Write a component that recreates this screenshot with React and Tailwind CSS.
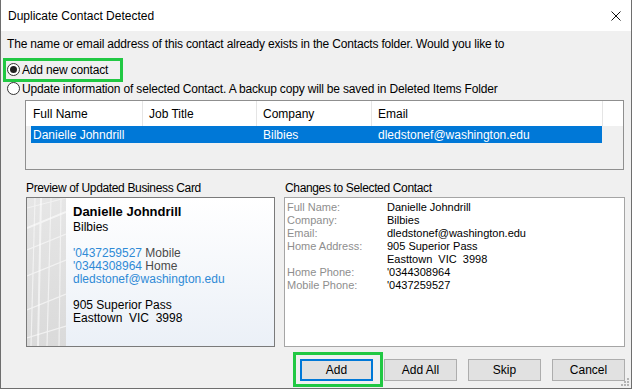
export default function App() {
  const btn =
    "w-[73px] h-[22px] bg-[#e1e1e1] border border-[#adadad] flex items-center justify-center text-[12px] text-black";
  return (
    <div className="relative w-[632px] h-[389px] bg-[#f0f0f0] border-x border-b border-[#6e6e6e] flex flex-col text-[12px] text-black font-['Liberation_Sans',Arial,sans-serif]">
      {/* title bar */}
      <div className="h-[31px] bg-white flex items-center justify-between pl-[7px] pr-[10px] shrink-0">
        <span className="leading-[16px]">Duplicate Contact Detected</span>
        <svg width="10" height="10" viewBox="0 0 10 10" className="block">
          <path d="M0.5 0.5 L9.5 9.5 M9.5 0.5 L0.5 9.5" stroke="#111" strokeWidth="1" />
        </svg>
      </div>

      <div className="mt-[5px] pl-[6px] leading-[16px] whitespace-nowrap tracking-[-0.17px]">
        The name or email address of this contact already exists in the Contacts folder. Would you like to
      </div>

      <div className="mt-[8px] flex flex-col tracking-[-0.17px]">
        <div className="h-[19px] flex items-center pl-[6px]">
          <span className="w-[13px] h-[13px] rounded-full border border-[#333] bg-white flex items-center justify-center">
            <span className="w-[7px] h-[7px] rounded-full bg-[#222]" />
          </span>
          <span className="ml-[2px] leading-[16px]">Add new contact</span>
        </div>
        <div className="h-[19px] flex items-center pl-[6px]">
          <span className="w-[13px] h-[13px] rounded-full border border-[#333] bg-white" />
          <span className="ml-[2px] leading-[16px] whitespace-nowrap">
            Update information of selected Contact. A backup copy will be saved in Deleted Items Folder
          </span>
        </div>
      </div>

      {/* list */}
      <div className="mt-[2px] ml-[24px] mr-[7px] h-[70px] border border-[#8f8f8f] bg-[#f0f0f0] flex flex-col">
        <div className="h-[25px] bg-white flex items-center">
          <div className="w-[117px] h-full border-r border-[#e5e5e5] pl-[7px] flex items-center">Full Name</div>
          <div className="w-[114px] h-full border-r border-[#e5e5e5] pl-[6px] flex items-center">Job Title</div>
          <div className="w-[115px] h-full border-r border-[#e5e5e5] pl-[6px] flex items-center">Company</div>
          <div className="w-[231px] h-full border-r border-[#e5e5e5] pl-[6px] flex items-center">Email</div>
        </div>
        <div className="ml-[5px] w-[571px] h-[17px] bg-[#0078d7] text-white flex items-center">
          <div className="w-[230px] pl-[2px]">Danielle Johndrill</div>
          <div className="w-[115px] pl-[2px]">Bilbies</div>
          <div className="pl-[2px]">dledstonef@washington.edu</div>
        </div>
      </div>

      {/* preview + changes */}
      <div className="mt-[10px] flex">
        <div className="ml-[25px] w-[249px] flex flex-col">
          <div className="leading-[16px] tracking-[-0.35px] whitespace-nowrap">Preview of Updated Business Card</div>
          <div className="mt-[1px] h-[150px] border border-[#7a7a7a] flex bg-gradient-to-b from-white to-[#ebf0f7]">
            <svg width="39" height="148" viewBox="0 0 39 148" className="block shrink-0">
              <defs>
                <linearGradient id="strip" x1="0" y1="0" x2="0" y2="1">
                  <stop offset="0" stopColor="#e6e6e6" />
                  <stop offset="1" stopColor="#dadada" />
                </linearGradient>
              </defs>
              <rect width="39" height="148" fill="url(#strip)" />
              <g stroke="#f4f4f4" strokeWidth="1.2" opacity="0.9">
                <path d="M0 10 L39 0" />
                <path d="M0 52 L39 36" />
                <path d="M0 78 L39 62" />
                <path d="M0 112 L39 96" />
                <path d="M0 140 L39 128" />
                <path d="M8 0 L4 148" />
                <path d="M24 0 L20 148" />
                <path d="M34 0 L32 148" />
              </g>
              <g stroke="#ffffff" strokeWidth="2" opacity="0.6">
                <path d="M0 30 L39 14" />
                <path d="M14 0 L11 148" />
              </g>
            </svg>
            <div className="pl-[7px] pt-[5px] flex flex-col text-[12px] leading-[13px]">
              <div className="text-[13px] font-bold leading-[18px]">Danielle Johndrill</div>
              <div>Bilbies</div>
              <div className="h-[13px]" />
              <div>
                <span className="text-[#2f8ad6]">'0437259527</span>
                <span className="text-[#4a4a4a]"> Mobile</span>
              </div>
              <div>
                <span className="text-[#2f8ad6]">'0344308964</span>
                <span className="text-[#4a4a4a]"> Home</span>
              </div>
              <div className="text-[#2f8ad6]">dledstonef@washington.edu</div>
              <div className="h-[13px]" />
              <div>905 Superior Pass</div>
              <div className="whitespace-pre">Easttown  VIC  3998</div>
            </div>
          </div>
        </div>

        <div className="ml-[9px] w-[341px] flex flex-col">
          <div className="leading-[16px] pl-[1px] tracking-[-0.35px] whitespace-nowrap">Changes to Selected Contact</div>
          <div className="mt-[1px] h-[150px] border border-[#a5a5a5] bg-white pl-[2px] pt-[3px] text-[11px] leading-[13px]">
            {[
              ["Full Name:", "Danielle Johndrill"],
              ["Company:", "Bilbies"],
              ["Email:", "dledstonef@washington.edu"],
              ["Home Address:", "905 Superior Pass"],
              ["", "Easttown  VIC  3998"],
              ["Home Phone:", "'0344308964"],
              ["Mobile Phone:", "'0437259527"],
            ].map(([k, v], i) => (
              <div key={i} className="flex">
                <div className="w-[100px] text-[#8e8e8e]">{k}</div>
                <div className="whitespace-pre">{v}</div>
              </div>
            ))}
          </div>
        </div>
      </div>

      {/* buttons */}
      <div className="mt-[12px] flex justify-end gap-[11px] pr-[6px]">
        <div className="w-[73px] h-[22px] bg-[#e1e1e1] border-2 border-[#0078d7] flex items-center justify-center">Add</div>
        <div className={btn}>Add All</div>
        <div className={btn}>Skip</div>
        <div className={btn}>Cancel</div>
      </div>

      {/* annotation overlays */}
      <div className="absolute left-[2px] top-[58px] w-[120px] h-[24px] border-[3px] border-[#21c843] pointer-events-none" />
      <div className="absolute left-[292px] top-[352px] w-[90px] h-[35px] border-[3px] border-[#21c843] pointer-events-none" />

      {/* resize grip */}
      <svg width="9" height="9" viewBox="0 0 9 9" className="absolute right-[1px] bottom-[1px]">
        <g fill="#b4b4b4">
          <rect x="6" y="0" width="2" height="2" />
          <rect x="3" y="3" width="2" height="2" />
          <rect x="6" y="3" width="2" height="2" />
          <rect x="0" y="6" width="2" height="2" />
          <rect x="3" y="6" width="2" height="2" />
          <rect x="6" y="6" width="2" height="2" />
        </g>
      </svg>
    </div>
  );
}
